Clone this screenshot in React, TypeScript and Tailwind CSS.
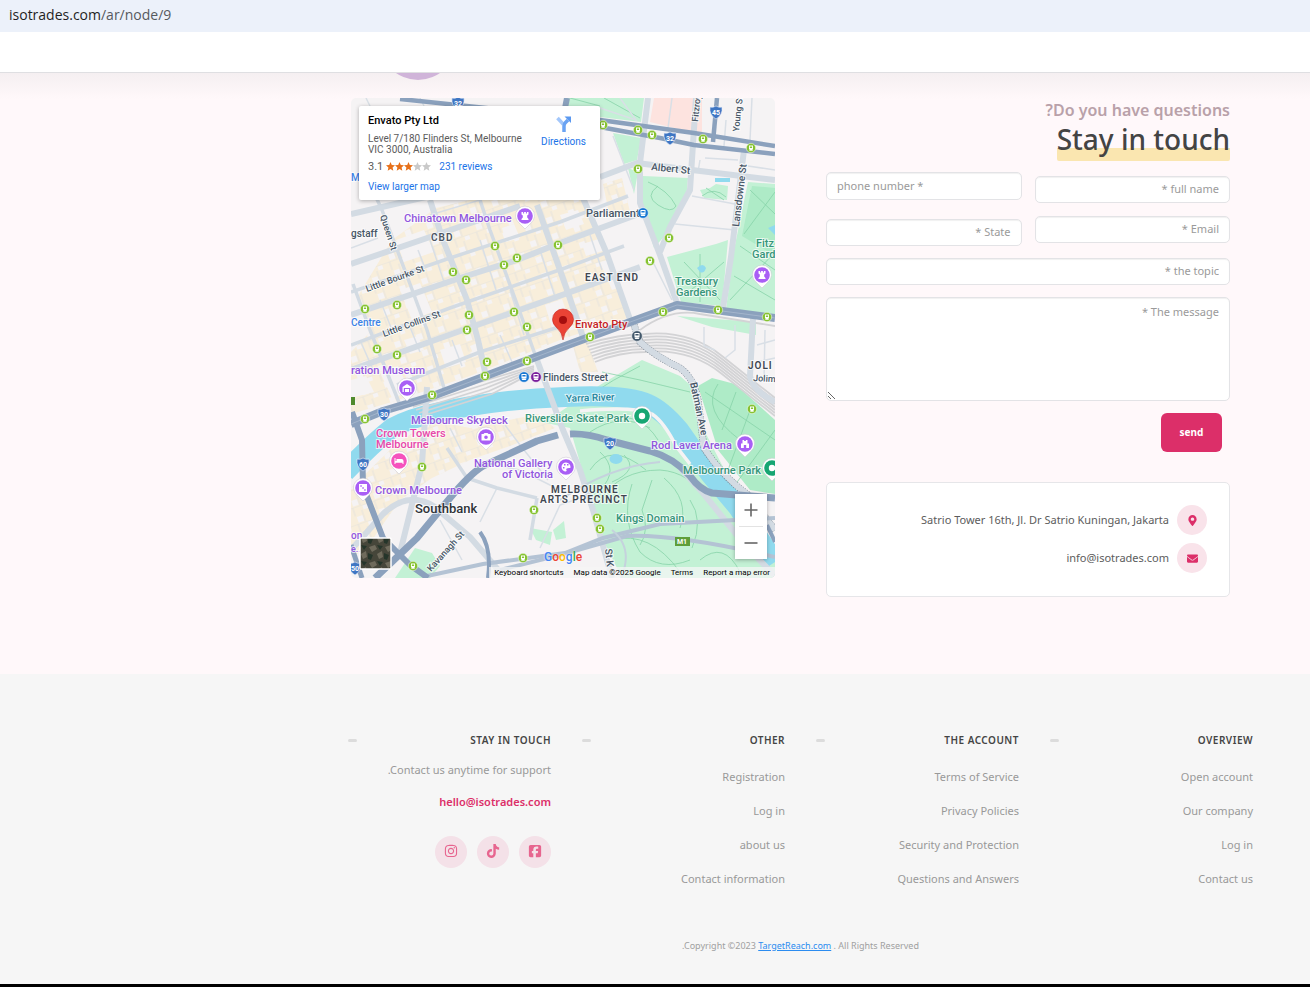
import { useState } from 'react'
import { FaEnvelope, FaInstagram, FaMapMarkerAlt, FaTiktok } from 'react-icons/fa'
import { FaSquareFacebook } from 'react-icons/fa6'

const FIELD =
  'block w-full rounded-[5px] border border-[#e3e3e6] bg-white px-[10px] text-[11px] shadow-[inset_0_1px_1px_rgba(0,0,0,0.06)] outline-none placeholder:text-[#9a9a9a] placeholder:opacity-100'

const FOOTER_COLUMNS = [
  { title: 'OTHER', links: ['Registration', 'Log in', 'about us', 'Contact information'] },
  {
    title: 'THE ACCOUNT',
    links: ['Terms of Service', 'Privacy Policies', 'Security and Protection', 'Questions and Answers'],
  },
  { title: 'OVERVIEW', links: ['Open account', 'Our company', 'Log in', 'Contact us'] },
]

const SOCIALS = [
  { name: 'Instagram', Icon: FaInstagram },
  { name: 'TikTok', Icon: FaTiktok },
  { name: 'Facebook', Icon: FaSquareFacebook },
]

// Map data, all in the units of the map's viewBox
const PARKS = [
  '565,98 644,98 641,122 600,117 565,112',
  '613,133 641,138 637,160 624,164',
  '628,168 638,172 634,194',
  '643,176 688,178 686,200 668,232 654,248 642,210',
  '700,190 710,188 716,184 728,186 727,200 704,198',
  '748,182 775,184 775,317 726,309 734,250',
  '667,257 716,244 728,240 722,306 681,302',
  '677,316 756,322 756,335 712,327',
  '400,418 440,404 440,412 410,424',
  '532,420 560,412 600,385 642,360 680,376 696,390 704,430 740,500 775,545 775,578 622,578 603,540 585,480 570,428',
  '395,578 415,548 432,553 440,566 430,578',
  '530,528 552,532 550,545 536,540',
  '553,530 564,521 566,538 556,540',
]

const DARK_PARKS = ['698,386 712,378 735,384 775,420 775,494 750,490 718,450', '752,186 775,188 775,256 742,236']

const TAN_AREAS = [
  '392,240 436,208 470,200 582,200 608,255 628,318 565,338 470,376 392,402 351,414 351,352 372,330 358,296',
  '351,488 392,448 430,420 470,428 538,414 555,428 510,446 470,460 432,478 400,500 372,540 351,560',
  '603,184 622,178 630,212 610,218',
  '572,342 586,338 598,372 580,372',
]

const GREY_BLOCKS = [
  '400,290 420,283 432,312 412,320',
  '396,240 424,230 434,252 404,262',
  '380,372 398,366 410,392 392,398',
  '545,305 562,299 570,322 552,328',
  '582,244 602,238 606,250 586,256',
  '600,262 622,256 630,284 612,290',
  '440,350 460,344 466,362 446,368',
  '351,380 366,376 374,392 351,398',
  '560,215 578,210 584,224 566,230',
  '502,228 514,224 520,238 506,242',
  '404,340 418,336 424,350 410,354',
  '470,346 480,342 484,352 474,356',
]

const STREETS = [
  'M351 370 L463 330 L565 294 L640 267',
  'M351 315 L463 277 L517 260 L560 243 L636 215',
  'M351 214 L430 196',
  'M351 264 L433 236 L520 206',
  'M600 177 L637 163 L692 170 L775 180',
  'M430 200 L443 240 L467 300 L478 340 L486 376',
  'M537 205 L567 290 L584 340',
  'M583 198 L607 254 L632 325',
  'M648 98 L640 163 L640 203 L660 255 L677 303',
  'M696 98 L690 190 L670 227 L660 252',
  'M744 150 L731 257 L723 308',
  'M537 360 L563 430 L580 470 L593 510 L612 578',
  'M427 387 L422 464 L400 553',
  'M351 550 L383 514 Q400 498 417 500 Q432 502 443 514 L470 537 L500 572',
  'M680 468 L703 493 L745 545 L775 576',
  'M753 318 L750 376 Q752 390 775 402',
  'M634 325 L640 342 Q655 356 680 368 Q694 378 698 400 L704 448 Q722 476 747 494 L775 530',
]

const SIDE_STREETS = [
  'M353 284 L370 330 L402 410',
  'M368 180 L382 210 L410 284 L427 330 L444 388',
  'M480 200 L490 230 L517 304 L537 360',
  'M351 345 L450 308 L565 268 L624 246',
  'M397 385 L480 352 L565 325',
  'M351 292 L450 258 L560 222 L628 196',
  'M447 448 L467 478 L497 488 L537 498',
  'M537 498 L530 540',
]

const LANES = [
  'M430 215 L520 188',
  'M408 322 L420 352',
  'M430 240 L445 285',
  'M480 240 L496 290',
  'M510 290 L524 335',
  'M500 335 L512 362',
  'M540 250 L556 300',
  'M452 340 L462 366',
  'M380 300 L392 330',
  'M360 340 L374 372',
  'M418 250 L425 268',
  'M590 235 L602 270',
  'M570 290 L620 276',
  'M692 196 L735 204',
  'M675 224 L735 230',
  'M652 260 L672 300',
  'M700 160 L698 172',
  'M705 158 L738 160 M775 170 L748 166',
  'M726 120 L724 146',
  'M752 98 L750 140',
  'M672 98 L668 128',
  'M620 98 L636 120 L600 108',
  'M613 136 L634 190',
  'M478 462 L520 470 L556 488',
  'M497 488 L480 522',
  'M440 520 L462 560',
  'M505 425 L520 445 L548 480',
  'M450 428 L462 452',
  'M704 327 L704 346 L715 350',
  'M735 325 L735 350 L725 358',
  'M757 345 L775 340',
  'M757 362 L775 358',
  'M765 330 L764 382',
  'M540 548 L560 505 L580 498',
  'M366 98 L370 106 M420 98 L424 106',
  'M351 236 L366 230 M351 248 L378 238',
]

const PATHS = [
  'M648 182 Q668 190 676 206 Q672 214 658 205 Q644 196 658 186',
  'M702 196 Q714 186 726 197 M706 188 L724 200',
  'M750 190 L775 214 M775 192 L744 234 M740 246 L775 270 M730 300 L775 252 M734 276 L775 300',
  'M684 262 L720 300 M724 262 L684 296 M700 254 L700 302',
  'M570 98 L600 106 M604 98 L640 118',
  'M590 395 Q612 380 640 366 M602 372 L640 380 L690 392',
  'M600 418 Q640 410 658 440 M590 432 Q620 412 650 428',
  'M590 470 Q610 440 646 470 M600 452 Q620 470 600 490 M624 455 Q640 470 612 482',
  'M600 500 Q620 470 660 470 Q690 472 706 500 M632 484 Q620 520 640 552 Q660 572 690 560',
  'M652 480 L642 510 Q650 530 640 545 M664 478 Q690 500 680 528 M690 500 Q704 520 692 548',
  'M612 540 Q650 530 680 572 M700 560 Q724 540 740 572',
  'M705 392 L775 440 M718 384 Q700 410 740 440 M736 392 L722 430 M752 405 L728 470 M775 430 L735 485',
]

const TRAM_STOPS = [
  [603, 125], [638, 130], [652, 135], [703, 139], [751, 148], [638, 169], [669, 238], [495, 246],
  [558, 245], [517, 258], [504, 265], [650, 261], [453, 272], [466, 280], [397, 305], [365, 309],
  [469, 315], [514, 312], [467, 330], [527, 327], [377, 349], [397, 355], [487, 362], [485, 376],
  [527, 361], [432, 395], [365, 419], [663, 312], [718, 310], [767, 317], [590, 337], [752, 409],
  [422, 467], [534, 510], [597, 518], [600, 529], [523, 558], [413, 566],
]

const SHIELDS = [
  [458, 103, '32'], [670, 138, '32'], [716, 112, '45'], [384, 414, '30'],
  [363, 464, '60'], [610, 443, '20'], [355, 568, '50'],
] as const

type Label = { x: number; y: number; text: string; color: string; size?: number; bold?: boolean; turn?: number }

const PURPLE = '#9156de'
const TEAL = '#37957a'
const SLATE = '#475666'

const LABELS: Label[] = [
  { x: 404, y: 222, text: 'Chinatown Melbourne', color: PURPLE, size: 11 },
  { x: 431, y: 241, text: 'CBD', color: '#4c5561', bold: true },
  { x: 351, y: 237, text: 'gstaff', color: SLATE },
  { x: 351, y: 181, text: 'Me', color: '#3b82e6' },
  { x: 380, y: 216, text: 'Queen St', color: SLATE, size: 9, turn: 72 },
  { x: 367, y: 292, text: 'Little Bourke St', color: SLATE, size: 9, turn: -20 },
  { x: 384, y: 337, text: 'Little Collins St', color: SLATE, size: 9, turn: -20 },
  { x: 351, y: 326, text: 'Centre', color: '#3b82e6' },
  { x: 585, y: 281, text: 'EAST END', color: '#3f4650', bold: true },
  { x: 586, y: 217, text: 'Parliament', color: SLATE, size: 11 },
  { x: 651, y: 170, text: 'Albert St', color: SLATE, turn: 6 },
  { x: 698, y: 122, text: 'Fitzroy', color: SLATE, size: 9, turn: -84 },
  { x: 739, y: 132, text: 'Young St', color: SLATE, size: 9, turn: -84 },
  { x: 739, y: 227, text: 'Lansdowne St', color: SLATE, turn: -83 },
  { x: 756, y: 247, text: 'Fitz', color: TEAL, size: 11 },
  { x: 752, y: 258, text: 'Gard', color: TEAL, size: 11 },
  { x: 675, y: 285, text: 'Treasury', color: TEAL, size: 11 },
  { x: 676, y: 296, text: 'Gardens', color: TEAL, size: 11 },
  { x: 575, y: 328, text: 'Envato Pty', color: '#c5221f', size: 11 },
  { x: 748, y: 369, text: 'JOLI', color: '#3f4650', bold: true },
  { x: 753, y: 381, text: 'Jolim', color: SLATE, size: 9, turn: 3 },
  { x: 351, y: 374, text: 'ration Museum', color: PURPLE, size: 11 },
  { x: 543, y: 381, text: 'Flinders Street', color: SLATE },
  { x: 566, y: 402, text: 'Yarra River', color: '#21839a', turn: -2 },
  { x: 525, y: 422, text: 'Riverslide Skate Park', color: TEAL, size: 11 },
  { x: 411, y: 424, text: 'Melbourne Skydeck', color: PURPLE, size: 11 },
  { x: 376, y: 437, text: 'Crown Towers', color: '#e848aa', size: 11 },
  { x: 376, y: 448, text: 'Melbourne', color: '#e848aa', size: 11 },
  { x: 690, y: 383, text: 'Batman Ave', color: SLATE, turn: 78 },
  { x: 651, y: 449, text: 'Rod Laver Arena', color: PURPLE, size: 11 },
  { x: 683, y: 474, text: 'Melbourne Park', color: TEAL, size: 11 },
  { x: 474, y: 467, text: 'National Gallery', color: PURPLE, size: 11 },
  { x: 502, y: 478, text: 'of Victoria', color: PURPLE, size: 11 },
  { x: 375, y: 494, text: 'Crown Melbourne', color: PURPLE, size: 11 },
  { x: 551, y: 493, text: 'MELBOURNE', color: '#3f4650', bold: true },
  { x: 540, y: 503, text: 'ARTS PRECINCT', color: '#3f4650', bold: true },
  { x: 415, y: 513, text: 'Southbank', color: '#2f3338', size: 13 },
  { x: 616, y: 522, text: 'Kings Domain', color: TEAL, size: 11 },
  { x: 431, y: 572, text: 'Kavanagh St', color: SLATE, size: 9, turn: -48 },
  { x: 605, y: 549, text: 'St K', color: SLATE, turn: 84 },
  { x: 351, y: 539, text: 'on', color: PURPLE },
  { x: 351, y: 552, text: 'e...', color: PURPLE, size: 9 },
]

function PoiPin({ x, y, color, children }: { x: number; y: number; color: string; children: React.ReactNode }) {
  return (
    <g transform={`translate(${x} ${y})`}>
      <path d="M0 13 L-6 7 A9.5 9.5 0 1 1 6 7 Z" fill="#fff" stroke="#c9c4cf" strokeWidth="0.5" />
      <circle r="7.8" fill={color} />
      <g fill="#fff">{children}</g>
    </g>
  )
}

const ROOK = 'M-3.5 -4 h1.6 v1.4 h1 v-1.4 h1.8 v1.4 h1 v-1.4 h1.6 v2.5 l-1.3 1 v2 l1.3 1.5 v1 h-7 v-1 l1.3 -1.5 v-2 l-1.3 -1 Z'

function CityMap() {
  return (
    <svg
      viewBox="351 98 424 480"
      preserveAspectRatio="xMidYMid slice"
      className="block h-full w-full font-['Roboto','Noto_Sans',sans-serif]"
      role="img"
      aria-label="Map of Melbourne"
    >
      <defs>
        <pattern id="lanes" width="23" height="17" patternUnits="userSpaceOnUse" patternTransform="rotate(-19)">
          <path d="M0 0 H23 M7 0 V9 M15 5 V17" fill="none" stroke="#e6e3dd" strokeWidth="1" />
          <path d="M8 10 h6 v6 h-6 Z M17 1 h5 v4 h-5 Z" fill="#f5f3f4" />
        </pattern>
        <pattern id="aerial" width="16" height="16" patternUnits="userSpaceOnUse">
          <rect width="16" height="16" fill="#46463a" />
          <path d="M1 3 l6 -2 2 4 -5 3 Z M9 10 l5 -3 1 6 -4 2 Z" fill="#6f6b5c" />
          <path d="M0 9 l5 2 -2 5 -3 -1 Z M9 1 l6 1 -3 4 Z" fill="#25352a" />
        </pattern>
      </defs>
      <rect x="351" y="98" width="424" height="480" fill="#f5f3f4" />
      <path d="M654 98 L702 98 L702 133 L682 130 L650 122 Z" fill="#fde3df" />
      {TAN_AREAS.map((p) => (
        <polygon key={p} points={p} fill="#f8eedb" />
      ))}
      {TAN_AREAS.map((p) => (
        <polygon key={p} points={p} fill="url(#lanes)" />
      ))}
      {GREY_BLOCKS.map((p) => (
        <polygon key={p} points={p} fill="#f5f3f4" />
      ))}
      {PARKS.map((p) => (
        <polygon key={p} points={p} fill="#c3f1d5" />
      ))}
      {DARK_PARKS.map((p) => (
        <polygon key={p} points={p} fill="#aeebc7" />
      ))}
      <g fill="none" stroke="#86d3a8" strokeWidth="0.8">
        {PATHS.map((d) => (
          <path key={d} d={d} />
        ))}
      </g>

      {/* Water */}
      <path
        d="M345 472 Q372 444 392 428 Q410 418 440 412 Q500 399 565 397 Q628 394 648 404 Q662 410 679 430 L710 474 L737 506 L775 562"
        fill="none"
        stroke="#90daee"
        strokeWidth="20"
      />
      <path d="M580 411 Q634 406 652 414 Q664 422 676 446 L690 464" fill="none" stroke="#f5f3f4" strokeWidth="3.5" />
      <ellipse cx="616" cy="459" rx="6.5" ry="5" fill="#90daee" />
      <path d="M697 268 q6 -6 9 0 q-2 6 -6 4 Z M715 178 h15 v4 h-15 Z M768 228 l7 -3 v10 Z" fill="#90daee" />

      {/* Rail yards */}
      <g fill="none" stroke="#d3d3d5" strokeWidth="1.8">
        {[0, 3, 6, 9, 12, 15, 18].map((o) => (
          <path key={o} d={`M${586 + o / 2} ${344 + o} Q620 ${334 + o} 645 ${334 + o} Q690 ${330 + o} 722 ${356 + o} L775 ${398 + o}`} />
        ))}
        {[0, 3, 6, 9, 12].map((o) => (
          <path key={o} d={`M${410 + o} ${404 + o} L${480 + o} ${382 + o} L534 ${366 + o / 2}`} />
        ))}
        <path d="M640 330 Q670 308 700 314 L775 326" />
      </g>

      <g fill="none" stroke="#d9dfe6" strokeWidth="1.5">
        {LANES.map((d) => (
          <path key={d} d={d} />
        ))}
      </g>
      <g fill="none" stroke="#d3dbe3" strokeWidth="3.5" strokeLinejoin="round">
        {SIDE_STREETS.map((d) => (
          <path key={d} d={d} />
        ))}
      </g>
      <path d={STREETS[STREETS.length - 1]} fill="none" stroke="#7b8794" strokeWidth="7" strokeDasharray="1.5 1" />
      <g fill="none" stroke="#d3dbe3" strokeWidth="6" strokeLinejoin="round">
        {STREETS.map((d) => (
          <path key={d} d={d} />
        ))}
      </g>
      <g fill="none" stroke="#b4c3d4" strokeWidth="4">
        <path d="M427 576 L483 564 L565 553 L603 538 L660 524 L775 518" />
        <path d="M500 570 L560 555 L627 536 Q677 534 775 557" />
      </g>
      <path d="M560 500 Q610 466 660 462" fill="none" stroke="#c5d2dd" strokeWidth="2" />
      <path d="M612 530 Q634 548 621 578" fill="none" stroke="#c5d2dd" strokeWidth="2" />

      {/* Highways */}
      <g fill="none" stroke="#8ba1bd" strokeLinejoin="round">
        <path d="M351 424 L383 411 L430 397 L483 377 L565 346 L633 321 L677 305 L775 318" strokeWidth="8" />
        <path d="M400 99 L600 120 L694 133 L775 146" strokeWidth="4.5" />
        <path d="M600 127 L660 138 L694 145 L775 154" strokeWidth="4.5" />
        <path d="M717 98 L713 142" strokeWidth="4.5" />
        <path d="M567 98 L565 108" strokeWidth="6" />
        <path
          d="M375 578 L417 538 L450 498 Q470 474 483 466 L537 441 L558 435"
          strokeWidth="7"
        />
        <path
          d="M570 434 Q586 433 607 440 L650 451 Q674 458 690 476 Q700 490 712 493 L775 498"
          strokeWidth="7"
        />
        <path d="M352 412 L362 440 L363 486 L383 538 L410 565 L428 578" strokeWidth="6" />
        <path d="M351 545 L362 578" strokeWidth="5" />
        <path d="M480 532 Q492 548 488 578" strokeWidth="4" />
        <path d="M767 525 L775 542" strokeWidth="4" />
      </g>
      <path d="M351 424 L383 411 L430 397 L483 377 L565 346 L633 321 L677 305 L775 318" fill="none" stroke="#a9bacf" strokeWidth="0.8" />

      {TRAM_STOPS.map(([x, y]) => (
        <g key={`${x}-${y}`}>
          <circle cx={x} cy={y} r="4.7" fill="#86c232" stroke="#fff" strokeWidth="0.5" />
          <path
            d={`M${x - 2} ${y - 2.5} h4 v4 h-4 Z M${x - 1.1} ${y - 1.5} v1.4 h2.2 v-1.4 Z M${x - 2} ${y + 2.8} l1 -1.3 h2 l1 1.3 Z`}
            fill="#fff"
            fillRule="evenodd"
          />
        </g>
      ))}

      {LABELS.map((l) => (
        <text
          key={`${l.text}-${l.y}`}
          transform={`translate(${l.x} ${l.y}) rotate(${l.turn ?? 0})`}
          fontSize={l.size ?? 10}
          fontWeight={l.bold ? 600 : 500}
          className={l.bold ? 'tracking-widest' : ''}
          fill={l.color}
          stroke="#fff"
          strokeOpacity="0.7"
          strokeWidth="2"
          paintOrder="stroke"
        >
          {l.text}
        </text>
      ))}

      {SHIELDS.map(([x, y, n]) => (
        <g key={`${x}-${y}`}>
          <path
            d={`M${x - 6} ${y - 5} q3 1 6 -1 q3 2 6 1 q1 8 -6 12 q-7 -4 -6 -12 Z`}
            fill="#3f76c3"
            stroke="#e9eff8"
            strokeWidth="0.6"
          />
          <text x={x} y={y + 3} fontSize="7" fontWeight="700" fill="#fff" textAnchor="middle">
            {n}
          </text>
        </g>
      ))}
      <rect x="675" y="537" width="15" height="9" fill="#5f9e3a" />
      <text x="682" y="544" fontSize="7" fontWeight="700" fill="#fff" textAnchor="middle">
        M1
      </text>
      <rect x="351" y="397" width="4" height="8" fill="#4f8a2c" />

      {/* Points of interest */}
      <PoiPin x={525} y={216} color="#a95ff5">
        <path d={ROOK} />
      </PoiPin>
      <PoiPin x={762} y={275} color="#a95ff5">
        <path d={ROOK} />
      </PoiPin>
      <PoiPin x={407} y={388} color="#a95ff5">
        <path d="M-4.500 -1 L0 -4 L4.500 -1 V4 H3.200 V0 H-3.200 V4 H-4.500 Z M-2 1 h4 v3 h-4 Z" />
      </PoiPin>
      <PoiPin x={486} y={437} color="#a95ff5">
        <path d="M-4.500 -3 h2 l1 -1 h3 l1 1 h2 v6.500 h-9 Z M-1.800 0.300 a1.800 1.800 0 1 0 3.600 0 a1.800 1.800 0 1 0 -3.600 0 Z" fillRule="evenodd" />
      </PoiPin>
      <PoiPin x={399} y={461} color="#f552bd">
        <path d="M-4.500 -3 h1 v3 h1 v-2 h5 a2 2 0 0 1 2 2 v3 h-1 v-1.300 h-7 v1.300 h-1 Z" />
      </PoiPin>
      <PoiPin x={363} y={488} color="#a95ff5">
        <path d="M-4 -4 h8 v8 h-8 Z M-2.700 -2.700 v1.500 h1.500 v-1.500 Z M-0.700 -0.700 v1.500 h1.500 v-1.500 Z M1.200 1.200 v1.500 h1.500 v-1.500 Z" fillRule="evenodd" />
      </PoiPin>
      <PoiPin x={566} y={467} color="#a95ff5">
        <path d="M0 -4.500 a4.500 4.500 0 1 0 0 9 q1.500 -1 0 -2.500 q2 -1.500 4.400 -1 a4.500 4.500 0 0 0 -4.400 -5.500 Z M-3 0 h1.500 v1.500 h-1.500 Z M-2 -3 h1.500 v1.500 h-1.500 Z M1 -3 h1.500 v1.500 h-1.500 Z" fillRule="evenodd" />
      </PoiPin>
      <PoiPin x={745} y={444} color="#a95ff5">
        <path d="M-4 4 V-0.500 h1.500 V-4 h1.600 v1 h1.800 v-1 h1.600 V-0.500 H4 V4 H1.200 V1 h-2.400 v3 Z" />
      </PoiPin>
      <PoiPin x={642} y={416} color="#17a673">
        <circle r="3.200" />
      </PoiPin>
      <PoiPin x={772} y={468} color="#17a673">
        <circle r="3.200" />
      </PoiPin>
      {[
        [643, 213, '#1a78d2'],
        [524, 377, '#1a78d2'],
        [536, 377, '#7a1f9c'],
        [637, 336, '#43586b'],
      ].map(([x, y, fill]) => (
        <g key={`${x}-${y}`} transform={`translate(${x} ${y})`}>
          <circle r="5.3" fill={fill as string} stroke="#fff" strokeWidth="0.5" />
          <path d="M-2.500 -3 h5 v4.500 h-5 Z M-1.600 -2 v1.500 h3.200 v-1.500 Z M-2.500 3 l1 -1.300 h3 l1 1.300 Z" fill="#fff" fillRule="evenodd" />
        </g>
      ))}
      <path d="M563 340 Q562 332 557 328 Q552.500 324 552.500 319.500 A10.500 10.500 0 0 1 573.500 319.500 Q573.500 324 569 328 Q564 332 563 340 Z" fill="#ea4335" stroke="#c5221f" strokeWidth="0.6" />
      <circle cx="563" cy="320" r="4" fill="#a50e0e" />

      <rect x="360" y="538" width="31" height="31" rx="1" fill="url(#aerial)" stroke="#fff" strokeWidth="1.5" />
    </svg>
  )
}

function MapPanel() {
  const [zoom, setZoom] = useState(14)

  return (
    <div className="relative h-[480px] overflow-hidden rounded-[5px] font-['Roboto','Noto_Sans',sans-serif]" data-zoom={zoom}>
      <CityMap />

      {/* Place card */}
      <div className="absolute top-2 left-2 flex h-[94px] w-[241px] justify-between rounded-[2px] bg-white pt-2 pr-[14px] pl-[9px] shadow-[0_1px_4px_rgba(0,0,0,0.3)]">
        <div className="text-[10px] leading-[11px] text-[#5b5b5b]">
          <div className="text-[11px] leading-[14px] font-medium text-black">Envato Pty Ltd</div>
          <div className="mt-[5px]">
            Level 7/180 Flinders St, Melbourne
            <br />
            VIC 3000, Australia
          </div>
          <div className="mt-[5px] flex items-center leading-[13px]">
            <span className="mr-[3px] text-[11px]">3.1</span>
            <svg viewBox="0 0 45 9" className="h-[9px] w-[45px]" role="img" aria-label="3.1 stars">
              {[0, 1, 2, 3, 4].map((i) => (
                <path
                  key={i}
                  transform={`translate(${i * 9} 0)`}
                  d="M4.500 0 L5.800 3 L9 3.300 L6.600 5.500 L7.300 8.700 L4.500 7 L1.700 8.700 L2.400 5.500 L0 3.300 L3.200 3 Z"
                  fill={i < 3 ? '#e7711b' : '#c9c9c9'}
                />
              ))}
            </svg>
            <a href="#reviews" className="ml-2 text-[#1a73e8]">
              231 reviews
            </a>
          </div>
          <a href="#map" className="mt-[8px] block text-[#1a73e8]">
            View larger map
          </a>
        </div>
        <a href="#directions" className="flex flex-col items-center pt-px text-[10px] leading-[12px] text-[#1a73e8]">
          <svg viewBox="0 0 16 18" className="mb-[3px] h-[18px] w-4" aria-hidden="true">
            <path d="M1.500 3 L7.500 9.500" stroke="#a3c7fb" strokeWidth="3.500" fill="none" />
            <path d="M8 17 V11 Q8 9 9.500 7.500 L12 5" stroke="#6aa3f3" strokeWidth="3.500" fill="none" />
            <path d="M8.500 1.500 H15 V8 Z" fill="#5a98f0" />
          </svg>
          Directions
        </a>
      </div>

      {/* Zoom buttons */}
      <div className="absolute right-2 bottom-[19px] flex w-8 flex-col items-center bg-white shadow-[0_1px_4px_rgba(0,0,0,0.3)]">
        <button type="button" aria-label="Zoom in" className="flex h-8 w-full items-center justify-center" onClick={() => setZoom(zoom + 1)}>
          <svg viewBox="0 0 14 14" className="size-[14px]" stroke="#666" strokeWidth="1.6">
            <path d="M0.500 7 H13.500 M7 0.500 V13.500" />
          </svg>
        </button>
        <div className="h-px w-6 bg-[#e3e3e3]" />
        <button type="button" aria-label="Zoom out" className="flex h-8 w-full items-center justify-center" onClick={() => setZoom(zoom - 1)}>
          <svg viewBox="0 0 14 14" className="size-[14px]" stroke="#666" strokeWidth="1.6">
            <path d="M0.500 7 H13.500" />
          </svg>
        </button>
      </div>

      <div className="absolute bottom-[13px] left-[193px] text-[12px] leading-[15px] font-medium [text-shadow:0_0_2px_#fff]">
        <span className="text-[#4285f4]">G</span>
        <span className="text-[#ea4335]">o</span>
        <span className="text-[#fbbc04]">o</span>
        <span className="text-[#4285f4]">g</span>
        <span className="text-[#34a853]">l</span>
        <span className="text-[#ea4335]">e</span>
      </div>

      <div className="absolute right-0 bottom-0 flex gap-[10px] bg-[#f5f5f5]/75 px-[5px] text-[8px] leading-[11px] text-black">
        <button type="button">Keyboard shortcuts</button>
        <span>Map data ©2025 Google</span>
        <a href="#terms">Terms</a>
        <a href="#report">Report a map error</a>
      </div>
    </div>
  )
}

function ContactForm() {
  return (
    <form onSubmit={(e) => e.preventDefault()}>
      <div className="flex gap-[13px]">
        <div className="flex flex-1 flex-col gap-[19px]">
          <input type="tel" aria-label="phone number" placeholder="phone number *" className={`${FIELD} h-7 pb-[2px]`} />
          <input type="text" aria-label="State" placeholder="* State" className={`${FIELD} h-[27px] pb-[2px] text-right`} />
        </div>
        <div className="flex flex-1 flex-col gap-[13px] pt-1">
          <input type="text" aria-label="full name" placeholder="* full name" className={`${FIELD} h-[27px] pb-[2px] text-right`} />
          <input type="email" aria-label="Email" placeholder="* Email" className={`${FIELD} h-[27px] pb-[2px] text-right`} />
        </div>
      </div>
      <input type="text" aria-label="the topic" placeholder="* the topic" className={`${FIELD} mt-3 h-[27px] pb-[2px] text-right`} />
      <textarea dir="rtl" aria-label="The message" placeholder="The message *" className={`${FIELD} mt-3 h-[104px] resize-y pt-[6px]`} />
      <div className="mt-3 flex justify-end pr-2">
        <button type="submit" className="h-[39px] w-[61px] rounded-[6px] bg-[#dc2f69] text-[10px] font-bold text-white">
          send
        </button>
      </div>
    </form>
  )
}

export default function App() {
  return (
    <div className="font-['Noto_Sans',sans-serif]">
      <div className="flex h-8 items-center bg-[#ecf1fa] px-[9px] pb-1 font-['Open_Sans',sans-serif] text-[14px] text-[#1f1f1f]">
        isotrades.com<span className="text-[#56595e]">/ar/node/9</span>
      </div>
      <header className="h-[41px] border-b border-[#dfdfe2] bg-white" />

      <section className="relative overflow-hidden bg-[#fff8fa] bg-[linear-gradient(#f5eff1,#fff8fa_26px)] pt-[25px] pb-[77px]">
        <div className="relative mr-20 ml-auto max-w-[879px]">
          <div className="absolute top-[-94px] left-[29px] size-[76px] rounded-full bg-[#d0b4d9]" />
          <div className="grid grid-cols-[424fr_404fr] gap-[51px]">
            <MapPanel />
            <div>
              <div className="text-right">
                <p className="text-[16px] leading-6 font-semibold text-[#b9a1a9]">?Do you have questions</p>
                <h2 className="inline-block rounded-[2px] bg-[linear-gradient(#fae6b0,#fae6b0)] bg-[length:100%_13px] bg-bottom bg-no-repeat pb-1 text-[28px] leading-[35px] font-medium text-[#444]">
                  Stay in touch
                </h2>
              </div>
              <div className="mt-[11px]">
                <ContactForm />
              </div>
              <address className="mt-[30px] flex h-[115px] flex-col items-end gap-2 rounded-[5px] border border-[#e6e6e9] bg-white pt-[22px] pr-[22px] text-[11px] text-[#5c5c5c] not-italic">
                <div className="flex items-center gap-2">
                  Satrio Tower 16th, Jl. Dr Satrio Kuningan, Jakarta
                  <span className="flex size-[30px] items-center justify-center rounded-full bg-[#f9e3ea] text-[#dc2f69]">
                    <FaMapMarkerAlt size={11} />
                  </span>
                </div>
                <div className="flex items-center gap-2">
                  info@isotrades.com
                  <span className="flex size-[30px] items-center justify-center rounded-full bg-[#f9e3ea] text-[#dc2f69]">
                    <FaEnvelope size={11} />
                  </span>
                </div>
              </address>
            </div>
          </div>
        </div>
      </section>

      <footer className="border-b-[3px] border-black bg-[#f6f6f6] pt-[58px] pb-7">
        <div className="mr-[57px] ml-auto max-w-[905px]">
          <div className="grid grid-cols-4 gap-[31px] text-right">
            <div>
              <FooterTitle>STAY IN TOUCH</FooterTitle>
              <p className="mt-3 text-[11px] leading-5 text-[#999]">.Contact us anytime for support</p>
              <a href="mailto:hello@isotrades.com" className="mt-3 block text-[11px] leading-5 font-semibold text-[#dc2f69]">
                hello@isotrades.com
              </a>
              <div className="mt-6 flex justify-end gap-[10px]">
                {SOCIALS.map(({ name, Icon }) => (
                  <a
                    key={name}
                    href={`#${name.toLowerCase()}`}
                    aria-label={name}
                    className="flex size-8 items-center justify-center rounded-full bg-[#f4e1e8] pb-[2px] text-[#e7658f]"
                  >
                    <Icon size={14} />
                  </a>
                ))}
              </div>
            </div>
            {FOOTER_COLUMNS.map((col) => (
              <nav key={col.title} aria-label={col.title}>
                <FooterTitle>{col.title}</FooterTitle>
                <ul className="mt-3 text-[11px] leading-[34px] text-[#999]">
                  {col.links.map((link) => (
                    <li key={link}>
                      <a href="#">{link}</a>
                    </li>
                  ))}
                </ul>
              </nav>
            ))}
          </div>
          <p className="mt-10 text-center text-[9px] leading-[20px] text-[#a0a0a0]">
            .Copyright ©2023{' '}
            <a href="#" className="text-[#2b8cf0] underline">
              TargetReach.com
            </a>{' '}
            . All Rights Reserved
          </p>
        </div>
      </footer>
    </div>
  )
}

function FooterTitle({ children }: { children: React.ReactNode }) {
  return (
    <div className="flex items-center justify-between">
      <span className="h-[3px] w-[9px] rounded-full bg-[#dcdcdc]" />
      <h3 className="text-[10px] leading-4 font-semibold tracking-wider text-[#444]">{children}</h3>
    </div>
  )
}
